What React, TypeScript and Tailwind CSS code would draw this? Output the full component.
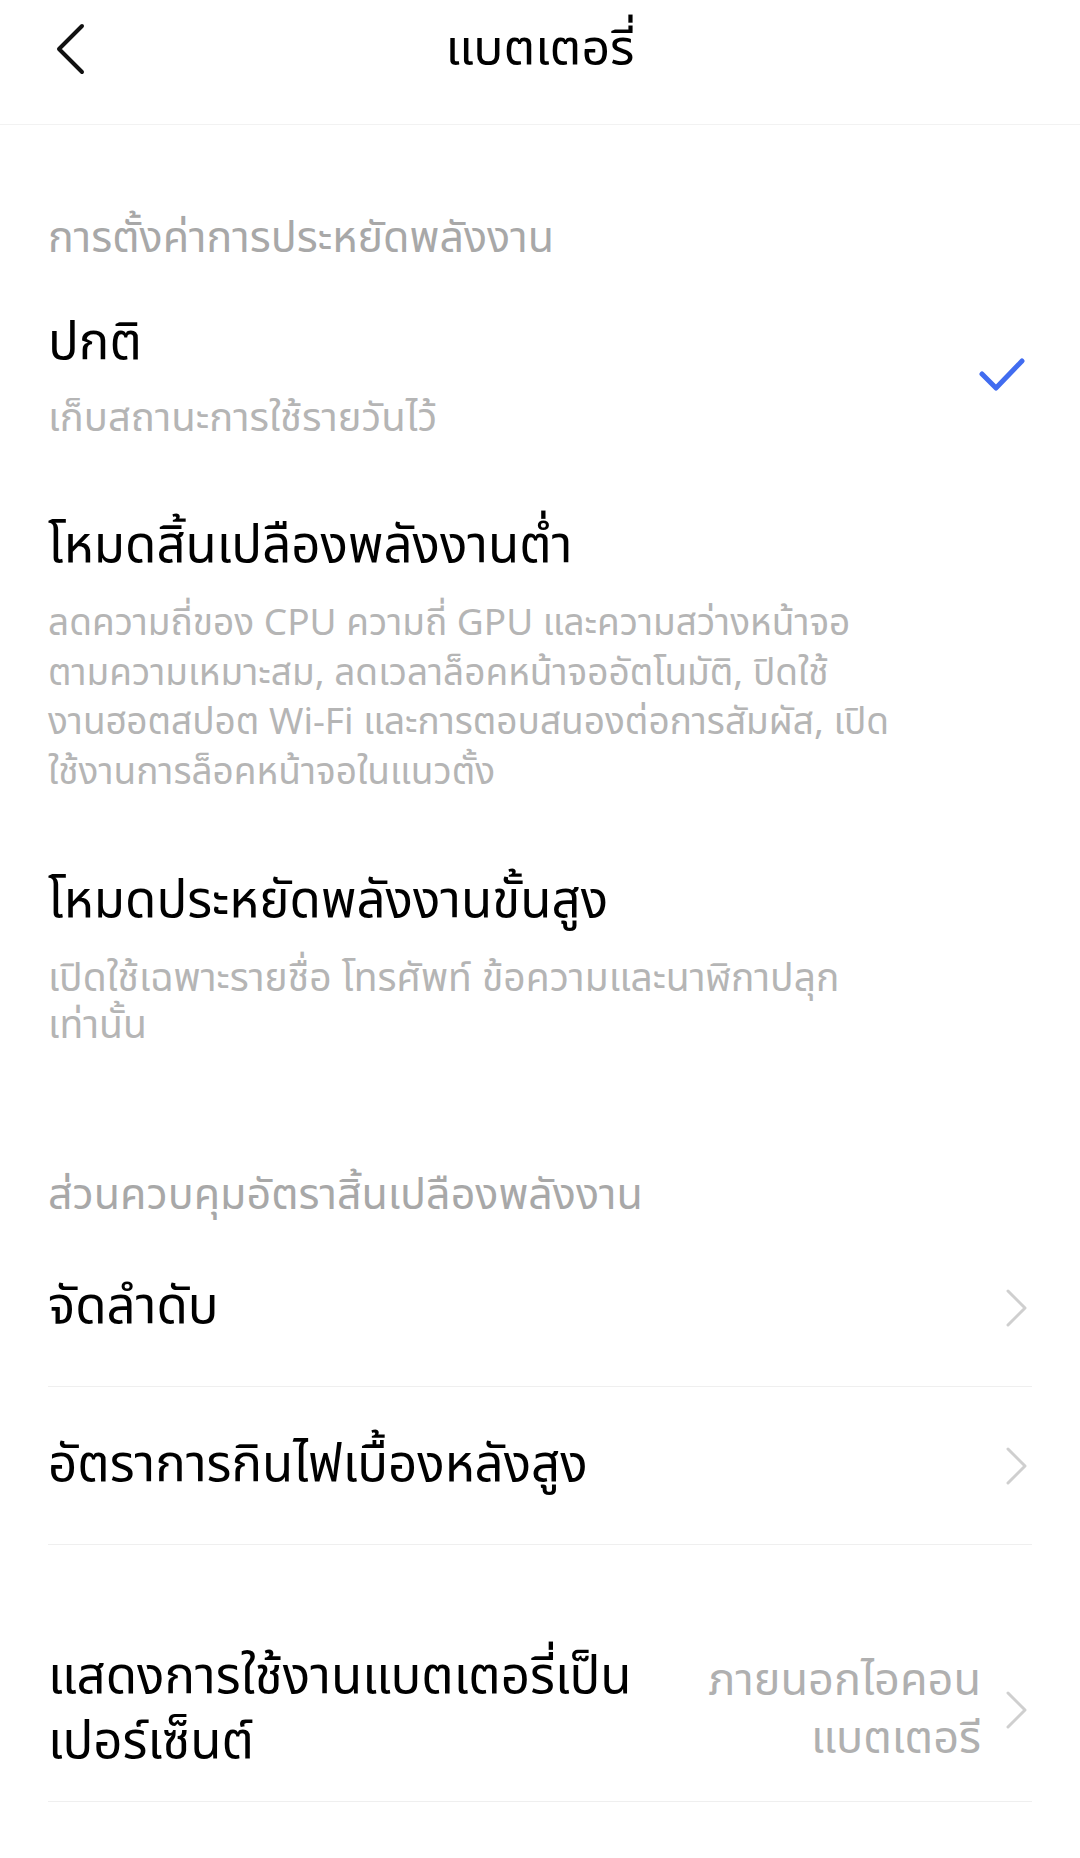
import { ReactNode } from "react";

const FONT = { fontFamily: '"Noto Sans Thai", "Noto Sans", "DejaVu Sans", sans-serif' };

function BackIcon() {
  return (
    <svg width="34" height="54" viewBox="0 0 34 54" fill="none">
      <path d="M28 4 L5 27 L28 50" stroke="#111" strokeWidth="4" strokeLinecap="round" strokeLinejoin="round" />
    </svg>
  );
}

function Check() {
  return (
    <svg width="52" height="42" viewBox="0 0 52 42" fill="none">
      <path d="M6 21 L20 35 L46 8" stroke="#416cf0" strokeWidth="5" strokeLinecap="round" strokeLinejoin="round" />
    </svg>
  );
}

function Chevron() {
  return (
    <svg width="24" height="40" viewBox="0 0 24 40" fill="none">
      <path d="M3 3 L20 20 L3 37" stroke="#cfcfcf" strokeWidth="3" strokeLinecap="round" strokeLinejoin="round" />
    </svg>
  );
}

function SectionTitle({ children, className }: { children: ReactNode; className?: string }) {
  return <div className={"text-[43px] leading-[52px] text-[#a8a8a8] " + (className ?? "")}>{children}</div>;
}

function NavRow({ title }: { title: string }) {
  return (
    <div className="flex h-[158px] items-center justify-between border-b border-[#efefef]">
      <div className="text-[51px] leading-[60px] text-black">{title}</div>
      <div className="pr-[3px]">
        <Chevron />
      </div>
    </div>
  );
}

export default function App() {
  return (
    <div className="min-h-screen w-[1080px] bg-white" style={FONT}>
      {/* Header */}
      <header className="h-[125px] border-b border-[#f2f2f2]">
        <div className="relative flex h-[100px] items-center justify-center">
          <div className="absolute left-[54px] top-[22px]">
            <BackIcon />
          </div>
          <h1 className="text-[50px] leading-[60px] text-black">แบตเตอรี่</h1>
        </div>
      </header>

      <main className="px-[48px]">
        <SectionTitle className="mt-[88px]">การตั้งค่าการประหยัดพลังงาน</SectionTitle>

        {/* Normal */}
        <div className="mt-[49px] flex items-center justify-between">
          <div>
            <div className="text-[51px] leading-[60px] text-black">ปกติ</div>
            <div className="mt-[21px] text-[40px] leading-[48px] text-[#b5b5b5]">เก็บสถานะการใช้รายวันไว้</div>
          </div>
          <div className="mr-[4px] mb-[10px]">
            <Check />
          </div>
        </div>

        {/* Low consumption */}
        <div className="mt-[74px]">
          <div className="text-[51px] leading-[60px] text-black">โหมดสิ้นเปลืองพลังงานต่ำ</div>
          <div className="mt-[23px] text-[37px] leading-[49.5px] text-[#b5b5b5]">
            <div className="whitespace-nowrap">ลดความถี่ของ CPU ความถี่ GPU และความสว่างหน้าจอ</div>
            <div className="whitespace-nowrap">ตามความเหมาะสม, ลดเวลาล็อคหน้าจออัตโนมัติ, ปิดใช้</div>
            <div className="whitespace-nowrap">งานฮอตสปอต Wi-Fi และการตอบสนองต่อการสัมผัส, เปิด</div>
            <div className="whitespace-nowrap">ใช้งานการล็อคหน้าจอในแนวตั้ง</div>
          </div>
        </div>

        {/* Ultra saving */}
        <div className="mt-[74px]">
          <div className="text-[51px] leading-[60px] text-black">โหมดประหยัดพลังงานขั้นสูง</div>
          <div className="mt-[24px] text-[39px] leading-[47px] text-[#b5b5b5]">
            <div className="whitespace-nowrap">เปิดใช้เฉพาะรายชื่อ โทรศัพท์ ข้อความและนาฬิกาปลุก</div>
            <div className="whitespace-nowrap">เท่านั้น</div>
          </div>
        </div>

        <SectionTitle className="mt-[120px]">ส่วนควบคุมอัตราสิ้นเปลืองพลังงาน</SectionTitle>

        <div className="mt-[7px]">
          <NavRow title="จัดลำดับ" />
          <NavRow title="อัตราการกินไฟเบื้องหลังสูง" />
        </div>

        <div className="flex items-center justify-between border-b border-[#efefef] pt-[100px] pb-[26px]">
          <div className="text-[51px] leading-[65px] text-black">
            แสดงการใช้งานแบตเตอรี่เป็น
            <br />
            เปอร์เซ็นต์
          </div>
          <div className="flex items-center gap-[24px]">
            <div className="text-right text-[45px] leading-[58px] text-[#b0b0b0]">
              ภายนอกไอคอน
              <br />
              แบตเตอรี
            </div>
            <div className="pr-[3px]">
              <Chevron />
            </div>
          </div>
        </div>
      </main>
    </div>
  );
}
